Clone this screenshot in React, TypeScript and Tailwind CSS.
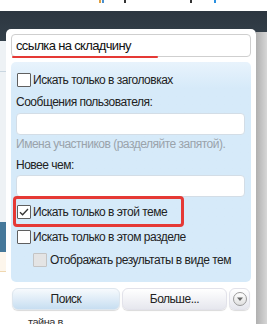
import React from "react";

function Box({ checked = false, disabled = false }: { checked?: boolean; disabled?: boolean }) {
  return (
    <span
      className={
        "inline-flex h-[14px] w-[14px] shrink-0 items-center justify-center rounded-[1px] border " +
        (disabled ? "border-[#c4c4c4] bg-[#e4e4e4]" : "border-[#5f5f5f] bg-white")
      }
    >
      {checked && (
        <svg width="12" height="12" viewBox="0 0 12 12">
          <path d="M2 6.2 L4.6 8.8 L10 3" fill="none" stroke="#333" strokeWidth="1.3" />
        </svg>
      )}
    </span>
  );
}

export default function App() {
  return (
    <div
      className="relative h-[324px] w-[267px] overflow-hidden bg-white text-[12px] tracking-[-0.5px] text-[#222]"
      style={{ fontFamily: '"Liberation Sans", Arial, sans-serif' }}
    >
      {/* page behind */}
      <div className="flex h-[11px] items-start bg-white">
        <span className="ml-[99px] mt-0 h-[3px] w-[2px] bg-[#e0a040]" />
        <span className="ml-[1px] h-[3px] w-[2px] bg-[#4a90d0]" />
        <span className="ml-[20px] h-[3px] w-[2px] bg-[#333]" />
        <span className="ml-[64px] h-[3px] w-[2px] bg-[#333]" />
        <span className="ml-[22px] h-[3px] w-[2px] bg-[#2a90e0]" />
      </div>
      <div className="h-[30px] bg-gradient-to-b from-[#2c3640] to-[#34404a]" />
      <div className="flex h-[283px] flex-col bg-[#eef2f5]">
        <div className="h-[31px] border-b border-[#c9d6e0]" />
        <div className="h-[150px]" />
        <div className="h-[30px] bg-[#45789a]" />
        <div className="h-[20px] border-b border-[#f0d8b0] bg-[#fdf6ec]" />
        <div className="flex-1 bg-white" />
      </div>
      <div className="absolute right-0 top-[32px] h-[292px] w-[11px] bg-gradient-to-r from-[#b0b0b0] to-[#d6d6d6]" />
      <div className="absolute bottom-[-3px] left-[28px] whitespace-nowrap text-[11px] leading-[9px] text-[#333]">тайна в</div>

      {/* popup */}
      <div className="absolute left-[6px] top-[29px] h-[289px] w-[250px] rounded-[5px] bg-white px-[5px] pt-[5px]">
        <div className="flex h-[23px] items-center whitespace-nowrap rounded-[4px] border border-[#cfcfcf] bg-white pl-[4px] text-[13px] tracking-[-0.65px] text-[#111]">
          ссылка на складчину
        </div>
        <div className="ml-[1px] mt-[-1px] h-[2px] w-[146px] rounded-full bg-[#e53935]" />

        <div className="mt-[4px] h-[220px] whitespace-nowrap rounded-[5px] bg-gradient-to-b from-[#e8f3fc] to-[#d6eaf9] to-[12%] px-[5px] pt-[10px]">
          <div className="flex h-[15px] items-center gap-[2px] pl-[1px]">
            <Box />
            <span>Искать только в заголовках</span>
          </div>
          <div className="mt-[8px] leading-[15px]">Сообщения пользователя:</div>
          <div className="mt-[3px] h-[22px] w-[229px] rounded-[4px] border border-[#d3dde6] bg-white" />
          <div className="mt-[2px] leading-[15px] text-[#9aa3ab]">Имена участников (разделяйте запятой).</div>
          <div className="mt-[6px] leading-[15px]">Новее чем:</div>
          <div className="mt-[2px] h-[22px] w-[229px] rounded-[4px] border border-[#d3dde6] bg-white" />
          <div className="relative flex h-[30px] items-center pl-[1px]">
            <div className="absolute left-[-3px] top-[-1px] h-[31px] w-[171px] rounded-[4px] border-[3px] border-[#e53935]" />
            <div className="flex items-center gap-[2px]">
              <Box checked />
              <span>Искать только в этой теме</span>
            </div>
          </div>
          <div className="mt-[2px] flex h-[15px] items-center gap-[2px] pl-[1px]">
            <Box />
            <span>Искать только в этом разделе</span>
          </div>
          <div className="mt-[8px] flex h-[15px] items-center gap-[3px] pl-[17px]">
            <Box disabled />
            <span>Отображать результаты в виде тем</span>
          </div>
        </div>

        <div className="mt-[6px] flex h-[22px] items-center gap-[2px] pl-[1px]">
          <div className="flex h-[22px] w-[108px] items-center justify-center rounded-[6px] border border-[#dde6ee] bg-gradient-to-b from-[#f7fafd] to-[#c7def1] text-[#222] shadow-[0_1px_1px_rgba(0,0,0,0.15)]">
            Поиск
          </div>
          <div className="flex h-[22px] w-[105px] items-center justify-center rounded-[6px] border border-[#e2e2ea] bg-gradient-to-b from-[#ffffff] to-[#e6e7ee] text-[#222] shadow-[0_1px_1px_rgba(0,0,0,0.15)]">
            Больше...
          </div>
          <div className="flex h-[22px] w-[21px] items-center justify-center rounded-[6px] border border-[#e2e2ea] bg-gradient-to-b from-white to-[#e6e7ee] shadow-[0_1px_1px_rgba(0,0,0,0.15)]">
            <span className="flex h-[14px] w-[14px] items-center justify-center rounded-full border border-[#9a9a9a] bg-gradient-to-b from-white to-[#e0e0e0]">
              <svg width="8" height="6" viewBox="0 0 8 6">
                <path d="M1 1.5 L7 1.5 L4 5 Z" fill="#666" />
              </svg>
            </span>
          </div>
        </div>
      </div>
    </div>
  );
}
